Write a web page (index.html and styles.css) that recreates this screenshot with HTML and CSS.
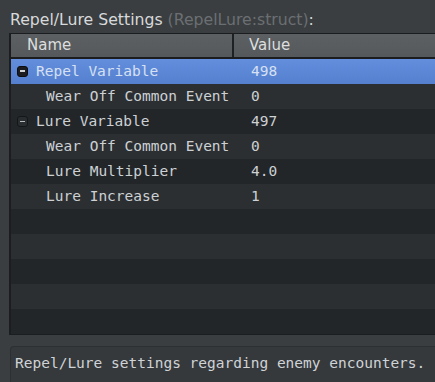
FILE: index.html
```html
<!DOCTYPE html>
<html lang="en">

<head>
    <meta charset="UTF-8">
    <title>Repel/Lure Settings</title>
    <link rel="stylesheet" href="styles.css">
</head>

<body>
    <div class="title">Repel/Lure Settings <span class="type">(RepelLure:struct)</span>:</div>

    <div class="tree">
        <div class="tree-header">
            <div class="col-name">Name</div>
            <div class="col-value">Value</div>
        </div>

        <div class="row odd selected">
            <div class="cell-name"><span class="toggle"></span>Repel Variable</div>
            <div class="cell-value">498</div>
        </div>
        <div class="row even">
            <div class="cell-name child">Wear Off Common Event</div>
            <div class="cell-value">0</div>
        </div>
        <div class="row odd">
            <div class="cell-name"><span class="toggle"></span>Lure Variable</div>
            <div class="cell-value">497</div>
        </div>
        <div class="row even">
            <div class="cell-name child">Wear Off Common Event</div>
            <div class="cell-value">0</div>
        </div>
        <div class="row odd">
            <div class="cell-name child">Lure Multiplier</div>
            <div class="cell-value">4.0</div>
        </div>
        <div class="row even">
            <div class="cell-name child">Lure Increase</div>
            <div class="cell-value">1</div>
        </div>
        <!-- filas vacias -->
        <div class="row odd"></div>
        <div class="row even"></div>
        <div class="row odd"></div>
        <div class="row even"></div>
        <div class="row odd"></div>
    </div>

    <div class="description">Repel/Lure settings regarding enemy encounters.</div>
</body>

</html>
```

FILE: styles.css
```css
body {
    margin: 0;
    background-color: #3a3e41;
    color: #d2d5d8;
    font-family: 'DejaVu Sans', sans-serif;
    overflow: hidden;
}

.title {
    padding: 10px 0 3px 10px;
    font-size: 15.7px;
    line-height: 20px;
    color: #d8d9da;
}

.type {
    color: #6b6f72;
}

.tree {
    margin-left: 9px;
    border-left: 2px solid #1b1d1f;
    border-top: 1px solid #1b1d1f;
    border-bottom: 1px solid #1b1d1f;
}

.tree-header {
    display: grid;
    grid-template-columns: 223px 1fr;
    height: 23px;
    background: linear-gradient(#5c6062, #56595b);
    border-bottom: 2px solid #1b1d1f;
    font-size: 15px;
    line-height: 23px;
    color: #dcdedf;
}

.col-name {
    padding-left: 16px;
    border-right: 2px solid #1e2022;
}

.col-value {
    padding-left: 15px;
}

.row {
    display: grid;
    grid-template-columns: 225px 1fr;
    height: 25px;
    font-family: 'DejaVu Sans Mono', monospace;
    font-size: 14.5px;
    line-height: 25px;
    color: #cdd1d4;
    white-space: nowrap;
}

.odd {
    background-color: #232629;
}

.even {
    background-color: #2c2f32;
}

.selected {
    background: linear-gradient(#638edc, #5580cf);
    color: #d6e0f2;
}

.cell-name {
    display: flex;
    align-items: center;
    padding-left: 6px;
}

.cell-name.child {
    padding-left: 35px;
}

.cell-value {
    padding-left: 15px;
}

.toggle {
    position: relative;
    width: 9px;
    height: 9px;
    margin-right: 8px;
    border: 1px solid #141618;
    border-radius: 3px;
    background-color: #2a2d30;
}

.toggle::after {
    content: "";
    position: absolute;
    left: 2px;
    top: 4px;
    width: 5px;
    height: 1px;
    background-color: #b8bcc0;
}

.selected .toggle {
    background-color: #1c1d20;
    border-color: #0c0d0e;
}

.selected .toggle::after {
    background-color: #d0d3d6;
    height: 2px;
    top: 3px;
}

.description {
    margin: 11px 0 0 10px;
    height: 29px;
    padding: 6px 0 0 4px;
    background-color: #35393c;
    border-top: 1px solid #2d3033;
    border-left: 1px solid #2d3033;
    border-radius: 4px 0 0 0;
    font-family: 'DejaVu Sans Mono', monospace;
    font-size: 14.5px;
    line-height: 20px;
    color: #d0d3d6;
    white-space: nowrap;
}
```
